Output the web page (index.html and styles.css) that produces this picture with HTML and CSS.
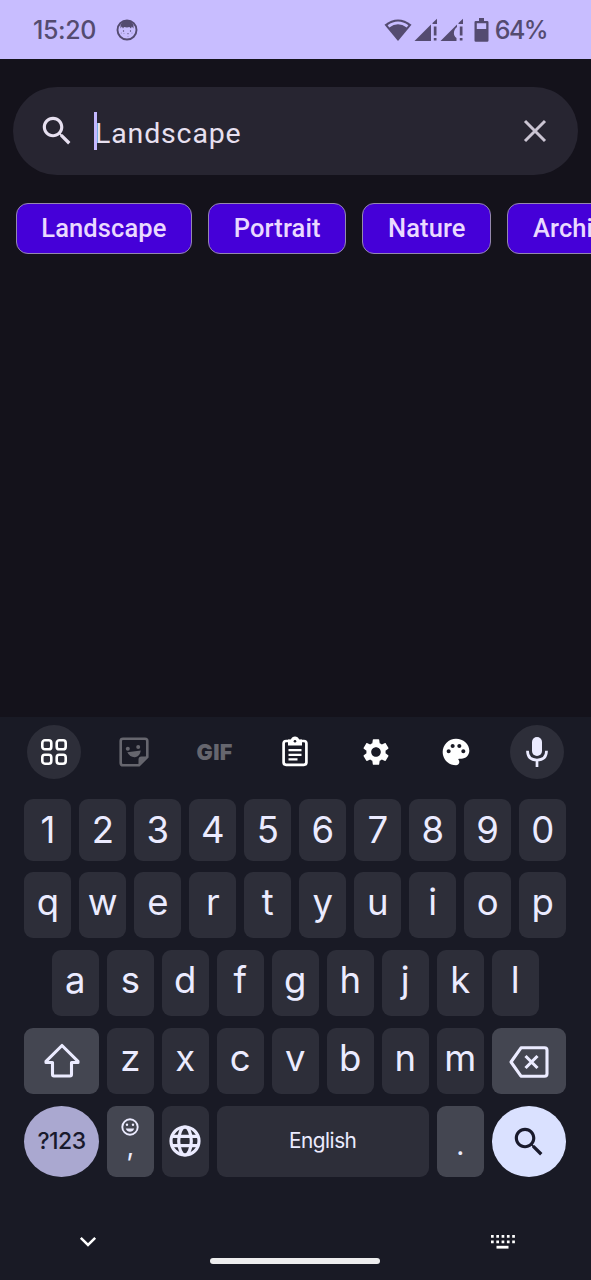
FILE: index.html
```html
<!DOCTYPE html>
<html lang="en">
<head>
<meta charset="utf-8">
<title>Search</title>
<link rel="stylesheet" href="styles.css">
</head>
<body>
<div class="screen">
  <header class="status">
    <span class="time">15:20</span>
    <svg class="face" width="22" height="22" viewBox="0 0 22 22"><circle cx="11" cy="11" r="9.500" fill="none" stroke="currentColor" stroke-width="1.900"/><path d="M4.500 9.500V6Q7 1.500 11 1.300Q15 1.500 17.500 6V9.500L15.800 7.600L15 9.600L13.400 8L11 8.400L8 8L7 9.600L5.800 7.600Z" fill="currentColor"/><g fill="currentColor"><circle cx="7.500" cy="12" r=".7"/><circle cx="14.500" cy="12" r=".7"/><circle cx="5.200" cy="14" r=".4"/><circle cx="8" cy="14.700" r=".4"/><circle cx="12" cy="14.700" r=".6"/><circle cx="16" cy="14" r=".4"/><circle cx="12" cy="17.300" r=".4"/></g></svg>
    <div class="status-right">
      <svg width="28" height="24" viewBox="0 0 28 24"><path d="M.5 6.800Q14-4 27.500 6.800L14 23Z" fill="currentColor"/><path d="M3.600 7.300Q14-.2 24.400 7.300L22.700 9.400Q14 3.200 5.300 9.400Z" fill="#c8bdff"/></svg>
      <svg class="sig" width="24" height="24" viewBox="0 0 24 24"><path d="M.5 23L17 6.500V23ZM18.500 5L23 .8V6H18.500ZM19.800 8.500h2.700v9h-2.700ZM19.800 20h2.700v2.600h-2.700Z" fill="currentColor"/></svg>
      <svg class="sig" width="24" height="24" viewBox="0 0 24 24"><path d="M.5 23L17 6.500V9C13 12 13 18 16.500 20V23ZM18.500 5L23 .8V6H18.500ZM19.800 8.500h2.700v9h-2.700ZM19.800 20h2.700v2.600h-2.700Z" fill="currentColor"/></svg>
      <svg class="battery" width="15" height="24" viewBox="0 0 15 24"><path fill-rule="evenodd" d="M5 0h5v3h3.200q1.300 0 1.300 1.300v18.200q0 1.300-1.300 1.300H1.800q-1.300 0-1.300-1.300V4.300Q.5 3 1.800 3H5ZM2.800 5.300v5.700h9.400V5.300Z" fill="currentColor"/></svg>
      <span class="percent">64%</span>
    </div>
  </header>
  <main class="content">
    <div class="search">
      <svg class="lens" width="40" height="40" viewBox="0 0 24 24"><path fill="currentColor" d="M15.500 14h-.79l-.28-.27C15.410 12.590 16 11.110 16 9.500 16 5.910 13.090 3 9.500 3S3 5.910 3 9.500 5.910 16 9.500 16c1.610 0 3.090-.59 4.230-1.570l.27.28v.79l5 4.990L20.490 19l-4.990-5zm-6 0C7.010 14 5 11.990 5 9.500S7.010 5 9.500 5 14 7.010 14 9.500 11.990 14 9.500 14z"/></svg>
      <span class="caret"></span>
      <span class="query">Landscape</span>
      <svg class="clear" width="24" height="24" viewBox="0 0 24 24"><path d="M2 2L22 22M22 2L2 22" stroke="currentColor" stroke-width="3"/></svg>
    </div>
    <div class="chips">
      <span class="chip">Landscape</span>
      <span class="chip">Portrait</span>
      <span class="chip">Nature</span>
      <span class="chip">Architecture</span>
    </div>
  </main>
  <section class="keyboard">
    <div class="tools">
      <span class="tool round"><svg width="28" height="28" viewBox="0 0 28 28" fill="none" stroke="#fff" stroke-width="2.600"><rect x="2.300" y="2.300" width="9" height="9" rx="2.600"/><rect x="16.700" y="2.300" width="9" height="9" rx="2.600"/><rect x="2.300" y="16.700" width="9" height="9" rx="2.600"/><rect x="16.700" y="16.700" width="9" height="9" rx="2.600"/></svg></span>
      <span class="tool dim"><svg width="30" height="30" viewBox="0 0 30 30"><path d="M4 1.700H26Q28.300 1.700 28.300 4V20L20 28.300H4Q1.700 28.300 1.700 26V4Q1.700 1.700 4 1.700Z" fill="none" stroke="currentColor" stroke-width="2.600"/><path d="M28 19.500L19.500 28V22.500Q19.500 19.500 22.500 19.500ZM8.300 15.300L21.800 13.500Q21 19.500 16 20.200Q11 20.500 8.300 15.300Z" fill="currentColor"/><circle cx="8.800" cy="11.700" r="2" fill="currentColor"/><circle cx="19.200" cy="10" r="2" fill="currentColor"/></svg></span>
      <span class="tool dim gif">GIF</span>
      <span class="tool"><svg width="28" height="32" viewBox="0 0 28 32"><rect x="2.600" y="5" width="22.800" height="23.800" rx="2.500" fill="none" stroke="#fff" stroke-width="2.700"/><path d="M7 3.500H9.800Q11 .5 14 .5T18.200 3.500H21V9.500H7Z" fill="#fff"/><circle cx="14" cy="5.300" r="1.300" fill="#191a25"/><path d="M7.500 14.200H20.500M7.500 18.800H20.500M7.500 23.400H16.500" stroke="#fff" stroke-width="2.300"/></svg></span>
      <span class="tool"><svg width="32" height="32" viewBox="0 0 24 24"><path fill="#fff" d="M19.140 12.940c.04-.3.060-.61.060-.94 0-.32-.02-.64-.07-.94l2.030-1.580c.18-.14.230-.41.120-.61l-1.920-3.320c-.12-.22-.37-.29-.59-.22l-2.390.96c-.5-.38-1.030-.7-1.620-.94l-.36-2.540c-.04-.24-.24-.41-.48-.41h-3.840c-.24 0-.43.170-.47.410l-.36 2.540c-.59.240-1.130.57-1.620.94l-2.390-.96c-.22-.08-.47 0-.59.220L2.740 8.870c-.12.210-.08.470.12.610l2.030 1.580c-.05.300-.09.630-.09.940s.02.640.070.940l-2.030 1.580c-.18.140-.23.410-.12.610l1.920 3.320c.12.220.37.290.59.220l2.390-.96c.5.380 1.030.7 1.620.94l.36 2.540c.05.240.24.410.48.410h3.840c.24 0 .44-.17.470-.41l.36-2.540c.59-.24 1.130-.56 1.620-.94l2.390.96c.22.080.47 0 .59-.22l1.920-3.320c.12-.22.070-.47-.12-.61l-2.010-1.580zM12 15.600c-1.980 0-3.600-1.620-3.600-3.600s1.620-3.600 3.600-3.600 3.600 1.620 3.600 3.600-1.620 3.600-3.600 3.600z"/></svg></span>
      <span class="tool"><svg width="32" height="32" viewBox="0 0 24 24"><path fill="#fff" d="M12 2C6.490 2 2 6.490 2 12s4.490 10 10 10c1.380 0 2.500-1.120 2.500-2.500 0-.61-.23-1.200-.64-1.670-.08-.1-.13-.21-.13-.33 0-.28.220-.5.500-.5H16c3.310 0 6-2.690 6-6 0-4.960-4.490-9-10-9zm5.500 11c-.83 0-1.500-.67-1.500-1.500s.67-1.500 1.500-1.500 1.500.67 1.500 1.500-.67 1.500-1.500 1.500zm-3-4c-.83 0-1.500-.67-1.500-1.500S13.670 6 14.500 6s1.500.67 1.500 1.500S15.330 9 14.500 9zM5 11.500c0-.83.67-1.500 1.500-1.500s1.500.67 1.500 1.500S7.330 13 6.500 13 5 12.330 5 11.500zm6-4c0 .83-.67 1.500-1.500 1.500S8 8.330 8 7.500 8.670 6 9.500 6s1.500.67 1.500 1.500z"/></svg></span>
      <span class="tool round"><svg width="24" height="32" viewBox="0 0 24 32"><rect x="7" y="1" width="10" height="19" rx="5" fill="#ebebff"/><path d="M2.500 14.800Q2.500 24 12 24T21.500 14.800M12 24V31" fill="none" stroke="#ebebff" stroke-width="2.700"/></svg></span>
    </div>
    <div class="row digits"><span class="key">1</span><span class="key">2</span><span class="key">3</span><span class="key">4</span><span class="key">5</span><span class="key">6</span><span class="key">7</span><span class="key">8</span><span class="key">9</span><span class="key">0</span></div>
    <div class="row"><span class="key">q</span><span class="key">w</span><span class="key">e</span><span class="key">r</span><span class="key">t</span><span class="key">y</span><span class="key">u</span><span class="key">i</span><span class="key">o</span><span class="key">p</span></div>
    <div class="row"><span class="key">a</span><span class="key">s</span><span class="key">d</span><span class="key">f</span><span class="key">g</span><span class="key">h</span><span class="key">j</span><span class="key">k</span><span class="key">l</span></div>
    <div class="row">
      <span class="key wide icon"><svg width="38" height="36" viewBox="0 0 38 36"><path d="M19 2.500L35 18.300V19.500H28.500V31.500Q28.500 33 27 33H11Q9.500 33 9.500 31.500V19.500H3V18.300Z" fill="none" stroke="currentColor" stroke-width="3.100" stroke-linejoin="round"/></svg></span>
      <span class="key">z</span><span class="key">x</span><span class="key">c</span><span class="key">v</span><span class="key">b</span><span class="key">n</span><span class="key">m</span>
      <span class="key wide icon backspace"><svg width="40" height="32" viewBox="0 0 40 32" fill="none" stroke="currentColor" stroke-width="3.100" stroke-linejoin="round"><path d="M12 1.800H35.500Q38 1.800 38 4.300V27.700Q38 30.200 35.500 30.200H12L2 16Z"/><path d="M16.500 10L28.500 22M28.500 10L16.500 22"/></svg></span>
    </div>
    <div class="row bottom">
      <span class="key wide symbols">?123</span>
      <span class="key alt comma"><svg width="18" height="18" viewBox="0 0 18 18"><circle cx="9" cy="9" r="7.700" fill="none" stroke="currentColor" stroke-width="1.900"/><circle cx="6" cy="6.700" r="1.200" fill="currentColor"/><circle cx="12" cy="6.700" r="1.200" fill="currentColor"/><path d="M4.800 10.500H13.200Q12 13.700 9 13.700T4.800 10.500Z" fill="currentColor"/></svg><span class="mark">,</span></span>
      <span class="key icon globe"><svg width="32" height="32" viewBox="0 0 32 32" fill="none" stroke="currentColor" stroke-width="3.200"><circle cx="16" cy="16" r="14"/><ellipse cx="16" cy="16" rx="6.300" ry="14"/><path d="M3 11.300H29M3 20.700H29"/></svg></span>
      <span class="key space">English</span>
      <span class="key alt dot">.</span>
      <span class="key wide go"><svg width="38" height="38" viewBox="0 0 24 24"><path fill="currentColor" d="M15.500 14h-.79l-.28-.27C15.410 12.590 16 11.110 16 9.500 16 5.910 13.090 3 9.500 3S3 5.910 3 9.500 5.910 16 9.500 16c1.610 0 3.090-.59 4.230-1.570l.27.28v.79l5 4.990L20.490 19l-4.990-5zm-6 0C7.010 14 5 11.990 5 9.500S7.010 5 9.500 5 14 7.010 14 9.500 11.990 14 9.500 14z"/></svg></span>
    </div>
    <footer class="nav">
      <svg class="down" width="18" height="12" viewBox="0 0 18 12"><path d="M1.800 1.800L9 9L16.200 1.800" fill="none" stroke="#fff" stroke-width="2.500"/></svg>
      <span class="handle"></span>
      <svg class="switcher" width="26" height="16" viewBox="0 0 26 16" fill="none" stroke="#fff"><path d="M1 2.300H26M1 7.800H26" stroke-width="2.700" stroke-dasharray="2.700 2.600"/><path d="M6.500 13.200H18.500" stroke-width="2.800"/></svg>
    </footer>
  </section>
</div>
</body>
</html>
```
FILE: styles.css
```css
* { box-sizing: border-box; }
body { margin: 0; background: #14121b; }
svg { display: block; flex: none; }
.screen { width: 591px; height: 1280px; display: flex; flex-direction: column; overflow: hidden; font-family: Inter, sans-serif; }

.status { height: 59px; flex: none; background: #c8bdff; color: #544b70; display: flex; align-items: center; padding: 0 44px 0 33px; font-size: 25px; font-weight: 500; }
.time { width: 83px; letter-spacing: -.4px; }
.status-right { margin-left: auto; display: flex; align-items: center; gap: 2px; }
.sig { margin-top: 1px; }
.battery { margin-left: 7.500px; }
.percent { margin-left: 4px; letter-spacing: -1.600px; }

.content { flex: 1; padding-top: 28px; display: flex; flex-direction: column; font-family: Roboto, sans-serif; }
.search { height: 88px; margin: 0 13px; border-radius: 44px; background: #272531; display: flex; align-items: center; padding: 0 31.500px 0 24.500px; color: #e7e0f0; }
.lens { width: 38px; height: 38px; }
.caret { width: 3px; height: 38px; margin-left: 18.500px; background: #c4b8ff; }
.query { font-size: 28.500px; letter-spacing: .85px; margin: 4px 0 0 -2px; }
.clear { margin-left: auto; color: #cbc5d3; }
.chips { display: flex; gap: 15.800px; padding: 28px 0 0 15.500px; }
.chip { flex: none; height: 51px; border: 1.500px solid #9488ad; border-radius: 12px; background: #4500d8; color: #ead9ff; font-size: 25.500px; font-weight: 500; line-height: 48px; padding: 0 24.800px; letter-spacing: .1px; }

.keyboard { height: 563px; flex: none; background: #191a25; padding: 8px 24.500px 0 24px; color: #ebebff; display: flex; flex-direction: column; }
.tools { height: 54px; margin: 0 2.500px 0 2.500px; display: flex; justify-content: space-between; }
.tool { width: 54px; height: 54px; display: flex; align-items: center; justify-content: center; }
.round { border-radius: 50%; background: #2d2e39; }
.dim { color: #66666e; }
.gif { font-size: 21.500px; font-weight: 900; letter-spacing: .4px; }

.row { display: flex; justify-content: center; gap: 7.800px; height: 66px; margin-top: 12px; font-size: 36.500px; line-height: 1; }
.key { width: 47.200px; flex: none; display: flex; align-items: center; justify-content: center; padding-bottom: 6px; border-radius: 9px; background: #2d2e39; }
.digits { height: 62px; margin: 20px 0 -1px; }
.digits .key { padding-bottom: 0; }
.wide { width: 74.700px; background: #444651; }
.alt { background: #444651; }
.key.icon { padding: 0; }
.key.backspace { padding-top: 2px; }
.bottom { height: 71px; }
.bottom .key { padding: 0; }
.bottom .globe { padding-bottom: 1px; }
.symbols { border-radius: 50%; background: #aaa8d0; color: #191a2c; font-size: 23px; font-weight: 500; letter-spacing: -.6px; }
.bottom .comma { flex-direction: column; justify-content: flex-start; padding-top: 12px; font-size: 27px; }
.mark { margin-top: -3px; }
.space { width: 212.200px; font-size: 20.800px; letter-spacing: -.5px; }
.bottom .dot { align-items: flex-end; padding-bottom: 18px; font-size: 28px; }
.go { border-radius: 50%; background: #dae1ff; color: #191a2c; }

.nav { flex: 1; display: flex; align-items: flex-start; justify-content: space-between; padding: 57px 51px 0 55px; }
.down { margin-top: 2px; }
.handle { width: 170px; height: 6px; border-radius: 3px; background: #ededee; margin: 24px 0 0 3px; }
```
